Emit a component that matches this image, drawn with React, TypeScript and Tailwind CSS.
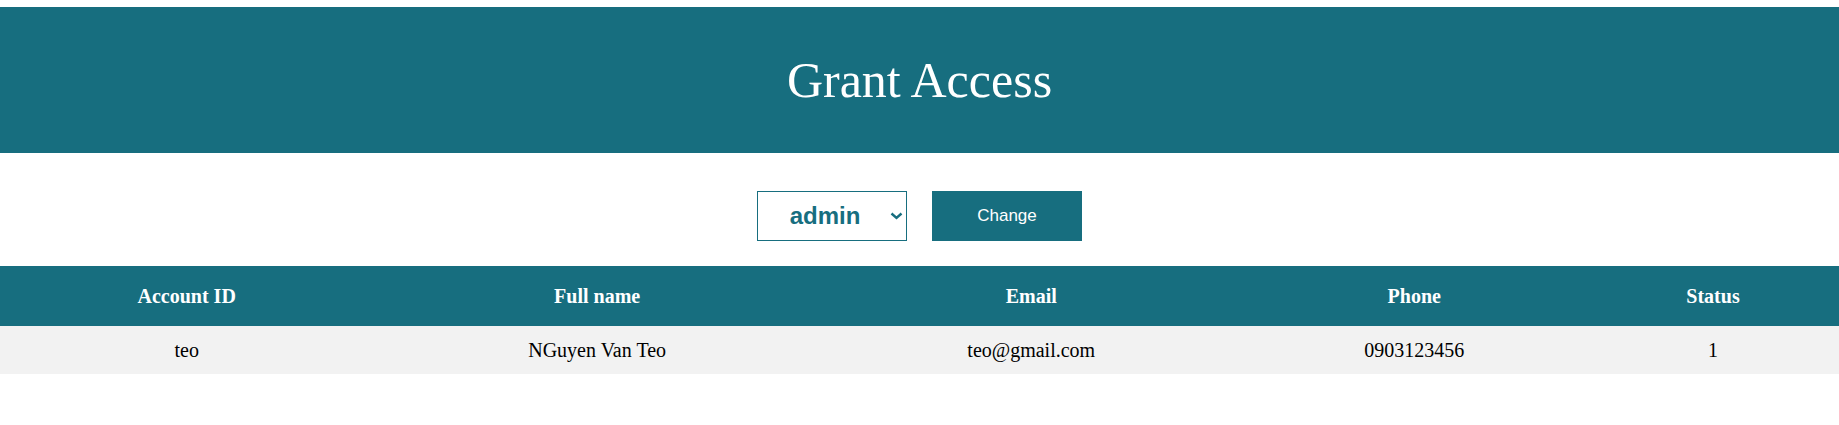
import React, { useState } from 'react';

interface Account {
  id: string;
  fullName: string;
  email: string;
  phone: string;
  status: number;
}

const accounts: Account[] = [
  { id: 'teo', fullName: 'NGuyen Van Teo', email: 'teo@gmail.com', phone: '0903123456', status: 1 },
];

const columns = ['Account ID', 'Full name', 'Email', 'Phone', 'Status'];

export default function App() {
  const [role, setRole] = useState('admin');

  return (
    <div className="pt-[7px] font-['Liberation_Serif',serif] text-black">
      {/* Header */}
      <div className="h-[146px] bg-[#176e7f] flex items-center justify-center">
        <h1 className="text-[50px] leading-none text-white">Grant Access</h1>
      </div>

      {/* Role switcher */}
      <div className="flex justify-center gap-[25px] mt-[38px]">
        <div className="relative">
          <select
            value={role}
            onChange={(e) => setRole(e.target.value)}
            className="appearance-none w-[150px] h-[50px] border border-[#176e7f] bg-white text-center font-['Liberation_Sans',Arial,sans-serif] font-bold text-[24px] text-[#176e7f] pr-[14px] outline-none"
          >
            <option value="admin">admin</option>
            <option value="user">user</option>
          </select>
          <svg
            className="absolute right-[4px] top-1/2 -translate-y-1/2 pointer-events-none"
            width="13"
            height="8"
            viewBox="0 0 13 8"
            fill="none"
          >
            <path d="M1.5 1.5l5 4.5 5-4.5" stroke="#176e7f" strokeWidth="2.4" />
          </svg>
        </div>
        <button
          type="button"
          className="w-[150px] h-[50px] bg-[#176e7f] text-white font-['Liberation_Sans',Arial,sans-serif] text-[17px]"
        >
          Change
        </button>
      </div>

      {/* Accounts table */}
      <table className="w-full border-collapse mt-[25px] text-[20px]">
        <thead>
          <tr className="bg-[#176e7f] text-white">
            {columns.map((col) => (
              <th key={col} className="px-[20px] py-[15px] font-bold text-center">
                {col}
              </th>
            ))}
          </tr>
        </thead>
        <tbody>
          {accounts.map((acc) => (
            <tr key={acc.id} className="bg-[#f2f2f2]">
              <td className="px-[14px] py-[9px] text-center">{acc.id}</td>
              <td className="px-[14px] py-[9px] text-center">{acc.fullName}</td>
              <td className="px-[14px] py-[9px] text-center">{acc.email}</td>
              <td className="px-[14px] py-[9px] text-center">{acc.phone}</td>
              <td className="px-[14px] py-[9px] text-center">{acc.status}</td>
            </tr>
          ))}
        </tbody>
      </table>
    </div>
  );
}
